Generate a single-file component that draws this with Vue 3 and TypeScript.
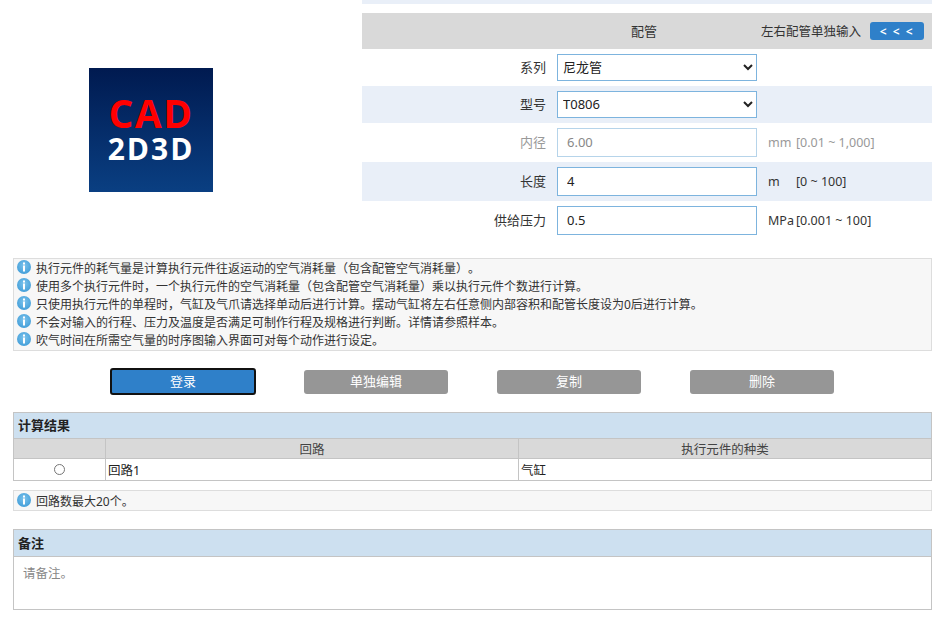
<script setup lang="ts">
const notes: string[] = [
  '执行元件的耗气量是计算执行元件往返运动的空气消耗量（包含配管空气消耗量）。',
  '使用多个执行元件时，一个执行元件的空气消耗量（包含配管空气消耗量）乘以执行元件个数进行计算。',
  '只使用执行元件的单程时，气缸及气爪请选择单动后进行计算。摆动气缸将左右任意侧内部容积和配管长度设为0后进行计算。',
  '不会对输入的行程、压力及温度是否满足可制作行程及规格进行判断。详情请参照样本。',
  '吹气时间在所需空气量的时序图输入界面可对每个动作进行设定。',
]
const actions: string[] = ['单独编辑', '复制', '删除']
</script>

<template>
  <div class="page">
    <section class="top">
      <div class="logo-col">
        <div class="logo">
          <span class="cad">CAD</span>
          <span class="dim">2D3D</span>
        </div>
      </div>
      <div class="form">
        <div class="strip"></div>
        <div class="form-head">
          <span class="head-title">配管</span>
          <span class="head-side">左右配管单独输入</span>
          <button class="arrows" type="button">&lt; &lt; &lt;</button>
        </div>
        <div class="row row-s">
          <label class="lbl">系列</label>
          <select class="ctl"><option>尼龙管</option></select>
        </div>
        <div class="row row-s alt">
          <label class="lbl">型号</label>
          <select class="ctl"><option>T0806</option></select>
        </div>
        <div class="row muted">
          <label class="lbl">内径</label>
          <input class="ctl txt" value="6.00" disabled />
          <span class="unit">mm</span><span class="range">[0.01 ~ 1,000]</span>
        </div>
        <div class="row alt">
          <label class="lbl">长度</label>
          <input class="ctl txt" value="4" />
          <span class="unit">m</span><span class="range">[0 ~ 100]</span>
        </div>
        <div class="row">
          <label class="lbl">供给压力</label>
          <input class="ctl txt" value="0.5" />
          <span class="unit">MPa</span><span class="range">[0.001 ~ 100]</span>
        </div>
      </div>
    </section>

    <section class="content">
      <div class="note-box">
        <div v-for="n in notes" :key="n" class="note">
          <svg class="info" viewBox="0 0 14 14" aria-hidden="true">
            <defs>
              <radialGradient id="infoFill" cx="0.5" cy="0.4" r="0.65">
                <stop offset="0" stop-color="#7cc3ec" />
                <stop offset="1" stop-color="#3f9cd8" />
              </radialGradient>
            </defs>
            <circle cx="7" cy="7" r="7" fill="url(#infoFill)" />
            <rect x="6" y="2.5" width="2" height="2" fill="#fff" />
            <rect x="6" y="5.5" width="2" height="6" fill="#fff" />
          </svg>
          <span class="note-text">{{ n }}</span>
        </div>
      </div>

      <div class="buttons">
        <button class="btn primary" type="button">登录</button>
        <button v-for="a in actions" :key="a" class="btn" type="button">{{ a }}</button>
      </div>

      <div class="panel result">
        <div class="panel-head">计算结果</div>
        <div class="tr th">
          <div class="c0"></div>
          <div class="c1">回路</div>
          <div class="c2">执行元件的种类</div>
        </div>
        <div class="tr td">
          <div class="c0"><span class="radio"></span></div>
          <div class="c1">回路1</div>
          <div class="c2">气缸</div>
        </div>
      </div>

      <div class="note-box single">
        <div class="note">
          <svg class="info" viewBox="0 0 14 14" aria-hidden="true">
            <circle cx="7" cy="7" r="7" fill="url(#infoFill)" />
            <rect x="6" y="2.5" width="2" height="2" fill="#fff" />
            <rect x="6" y="5.5" width="2" height="6" fill="#fff" />
          </svg>
          <span class="note-text">回路数最大20个。</span>
        </div>
      </div>

      <div class="panel remark">
        <div class="panel-head">备注</div>
        <div class="remark-body">请备注。</div>
      </div>
    </section>
  </div>
</template>

<style>
html, body { background: #fff; }
</style>

<style scoped>
.page {
  width: 942px;
  height: 619px;
  overflow: hidden;
  font-family: "Noto Sans", "Noto Sans CJK SC", sans-serif;
  font-size: 12px;
  color: #333;
  text-spacing-trim: space-all;
}
.top { display: flex; height: 240px; font-size: 13px; }
.logo-col { width: 362px; padding: 68px 0 0 89px; box-sizing: border-box; }
.logo {
  width: 124px;
  height: 124px;
  background: linear-gradient(#001a50, #0a3f82);
  display: flex;
  flex-direction: column;
  align-items: center;
  padding-top: 26px;
  box-sizing: border-box;
  font-family: "Open Sans", "Noto Sans", sans-serif;
  font-weight: 700;
}
.cad { color: #ff0000; font-size: 39px; line-height: 38px; letter-spacing: 1.5px; }
.dim { color: #fff; font-size: 30px; line-height: 32px; letter-spacing: 2px; margin-top: 1px; }
.form { width: 570px; }
.strip { height: 4px; background: #e9eff8; margin-bottom: 9px; }
.form-head {
  height: 36px;
  background: #d9d9d9;
  display: flex;
  align-items: center;
  padding: 0 8px 2px 0;
  box-sizing: border-box;
}
.head-title { margin-left: 269px; width: 130px; }
.head-side { margin-right: 9px; font-size: 12.5px; }
.arrows {
  width: 54px;
  height: 18px;
  padding: 0;
  border: 0;
  border-radius: 3px;
  background: #2f80c9;
  color: #fff;
  font: inherit;
  font-size: 12px;
  font-weight: 600;
  letter-spacing: 1.5px;
  position: relative;
  top: 1px;
}
.row { height: 39px; display: flex; align-items: center; }
.row-s { height: 37px; }
.alt { background: #e9eff8; }
.lbl { width: 185px; text-align: right; margin-right: 10px; position: relative; top: -1px; left: -1px; }
.ctl {
  width: 200px;
  height: 27px;
  box-sizing: border-box;
  border: 1px solid #7db4de;
  background: #fff;
  font: inherit;
  color: #222;
  padding: 0 0 2px 1px;
  border-radius: 0;
  outline: none;
}
.txt { height: 29px; padding: 0 0 2px 9px; }
.unit { margin-left: 11px; width: 28px; font-size: 12.5px; }
.range { white-space: nowrap; font-size: 12.5px; }
.muted { color: #999; }
.muted .ctl { border-color: #b6d4ea; color: #888; background: #fff; opacity: 1; }

.content { padding: 18px 10px 0 13px; }
.note-box {
  height: 93px;
  box-sizing: border-box;
  border: 1px solid #ddd;
  background: #f7f7f7;
  padding: 0 3px;
}
.note { height: 18px; display: flex; align-items: center; line-height: 18px; white-space: nowrap; }
.info { width: 14px; height: 14px; margin-right: 5px; flex: none; position: relative; top: -1px; }
.note-text { position: relative; top: 1px; }
.buttons { display: flex; align-items: center; height: 27px; margin: 17px 0 17px 97px; }
.btn {
  width: 144px;
  height: 24px;
  margin-left: 49px;
  padding: 0 0 2px;
  border: 0;
  border-radius: 3px;
  background: #969696;
  color: #fff;
  font: inherit;
  font-size: 13px;
}
.btn:first-child { margin-left: 0; }
.primary { width: 146px; height: 27px; background: #2f80c9; border: 2px solid #111; margin-right: -1px; padding: 0 0 3px; }
.panel { border: 1px solid #c4c4c4; box-sizing: border-box; }
.panel-head {
  height: 25px;
  line-height: 25px;
  background: #cde0f0;
  padding-left: 4px;
  font-weight: 700;
  color: #222;
  font-size: 13px;
}
.tr { display: flex; }
.th { height: 21px; line-height: 21px; background: #d9d9d9; border-top: 1px solid #c4c4c4; border-bottom: 1px solid #c4c4c4; box-sizing: border-box; text-align: center; color: #444; font-size: 12.5px; }
.td { height: 21px; line-height: 23px; background: #fff; color: #222; font-size: 12.5px; }
.c0 { width: 91px; flex: none; display: flex; align-items: center; justify-content: center; }
.c1, .c2 { border-left: 1px solid #c4c4c4; box-sizing: border-box; }
.c1 { width: 413px; flex: none; }
.c2 { flex: 1; }
.td .c1, .td .c2 { padding-left: 2px; }
.radio { width: 11px; height: 11px; box-sizing: border-box; border: 1px solid #767676; border-radius: 50%; background: #fff; }
.single { height: 21px; margin-top: 9px; }
.single .note { height: 20px; }
.remark { margin-top: 18px; height: 81px; }
.remark .panel-head { height: 26px; line-height: 27px; border-bottom: 1px solid #c4c4c4; }
.remark-body { padding: 8px 9px; color: #888; line-height: 18px; font-size: 12.5px; }
</style>
